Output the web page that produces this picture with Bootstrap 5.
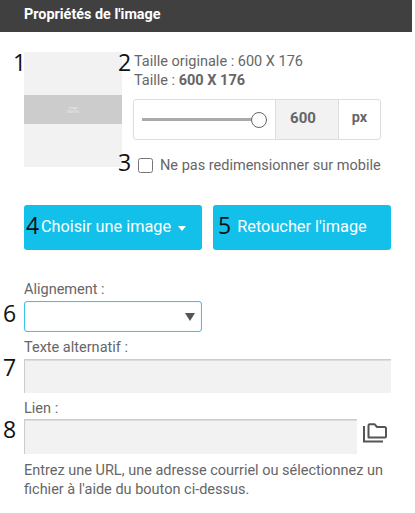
<!DOCTYPE html>
<html lang="fr">
<head>
<meta charset="utf-8">
<title>Propriétés de l'image</title>
<link href="https://cdn.jsdelivr.net/npm/bootstrap@5.3.0/dist/css/bootstrap.min.css" rel="stylesheet">
<style>
html,body{height:100%;overflow:hidden}
body{font-family:Roboto,"Liberation Sans",sans-serif;font-size:14.5px;line-height:19px;color:#666;background:#fff}
.panel-head{height:32px;background:#404040;color:#fff;font-weight:700;font-size:14.4px;line-height:30px;padding-left:24px}
.panel-body{position:relative;padding:20px 24px 0;width:415px}
.top-row{height:153px}
.thumb{width:98px;height:115px;background:#f2f2f2;display:flex;align-items:center;justify-content:center;flex:none;margin-right:12px}
.thumb-band{width:100%;height:29px;background:#ccc;display:flex;align-items:center;justify-content:center;color:#eee;font-size:3px;line-height:4px;text-align:center}
.info-col{width:248px;flex:none;margin-left:-1px}
.info-line{padding-left:1px}
.info-line b{font-weight:700}
.size-box{height:41px;border:1px solid #ddd;border-radius:3px;margin-top:9px;overflow:hidden}
.slider-cell{flex:1;padding:0 8px 0 8px;display:flex;align-items:center}
.track{flex:1;height:3px;background:#aaa}
.knob{width:16px;height:16px;border:1px solid #666;border-radius:50%;background:#fff;margin-left:-1px}
.value-cell{width:64px;background:#f2f2f2;border-left:1px solid #ddd;border-right:1px solid #ddd;font-weight:700;font-size:15px;text-align:center;line-height:36px;padding-right:8px}
.unit-cell{width:41px;font-weight:700;text-align:center;line-height:35px}
.check-line{margin-top:16px;padding-left:5px;height:19px;display:flex;align-items:center;gap:7px}
.check-box{width:15px;height:15px;margin:0;border:1px solid #767676;border-radius:2px;flex:none}
.act-row{gap:11px}
.act-btn{width:178px;height:45px;background:#12c0ea;border:0;border-radius:3px;color:#fff;font-size:16.3px;padding:0;display:flex;align-items:center;justify-content:center;flex:none}
.act-btn:hover{background:#12c0ea;color:#fff}
.act-first{padding-left:1px}
.caret{display:inline-block;width:0;height:0;border-left:4px solid transparent;border-right:4px solid transparent;border-top:5px solid #fff;margin-left:7px;margin-top:2px}
.field-label{display:block;margin:0;height:19px;line-height:19px}
.pick{display:block;width:178px;height:31px;border:1px solid #3cc3e6;border-radius:3px;background:#fff;position:relative;margin-top:2px;box-shadow:inset 0 0 1px #8adcf0}
.pick::after{content:"";position:absolute;right:6px;top:11px;border-left:5px solid transparent;border-right:5px solid transparent;border-top:8px solid #555}
.flat-input{display:block;height:34px;background:#f2f2f2;border:0;border-top:1px solid #ccc;border-left:1px solid #ccc;box-shadow:inset 0 1px 0 #ddd;border-radius:0;padding:0 4px;outline:0}
.wide{width:367px;margin-top:2px}
.narrow{width:333px;height:35px}
.folder{width:24px;height:20px;flex:none;margin-left:6px;margin-top:4px}
.help-text{margin:7px 0 0;line-height:19px}
.f-first{margin-top:30px}
.f-alt{margin-top:6px}
.f-link{margin-top:6px}
.link-row{margin-top:1px}
.marker{position:absolute;font-family:"Open Sans","Noto Sans",sans-serif;font-size:23px;line-height:24px;color:#111}
.edge{position:absolute;top:0;right:0;width:3px;height:100%;background:#fdfdfd}
.m1{left:13px;top:50px}.m2{left:118px;top:50px}.m3{left:118px;top:150px}.m4{left:26px;top:213px}.m5{left:218px;top:213px}.m6{left:3px;top:301px}.m7{left:3px;top:355px}.m8{left:3px;top:417px}
</style>
</head>
<body>
<div class="panel-head">Propriétés de l'image</div>
<div class="panel-body">
  <div class="top-row d-flex">
    <div class="thumb"><div class="thumb-band">image<br>600×176</div></div>
    <div class="info-col">
      <div class="info-line">Taille originale : 600 X 176</div>
      <div class="info-line">Taille : <b>600 X 176</b></div>
      <div class="size-box d-flex">
        <div class="slider-cell"><div class="track"></div><div class="knob"></div></div>
        <div class="value-cell">600</div>
        <div class="unit-cell">px</div>
      </div>
      <label class="check-line"><input type="checkbox" class="check-box"><span>Ne pas redimensionner sur mobile</span></label>
    </div>
  </div>
  <div class="d-flex act-row">
    <button type="button" class="btn act-btn act-first">Choisir une image<span class="caret"></span></button>
    <button type="button" class="btn act-btn">Retoucher l'image</button>
  </div>
  <label class="field-label f-first">Alignement :</label>
  <div class="pick"></div>
  <label class="field-label f-alt">Texte alternatif :</label>
  <input type="text" class="flat-input wide" aria-label="Texte alternatif">
  <label class="field-label f-link">Lien :</label>
  <div class="d-flex align-items-start link-row">
    <input type="text" class="flat-input narrow" aria-label="Lien">
    <svg class="folder" viewBox="0 0 24 20" fill="none" stroke="#555" stroke-width="2"><path d="M1 3V18.500H20"/><path d="M5.500 14.500V2.500C5.500 1.700 6 1.200 6.800 1.200H11.500L14 4H21.500C22.500 4 23 4.500 23 5.500V13.500C23 14.200 22.500 14.500 22 14.500Z" stroke-linejoin="round"/></svg>
  </div>
  <p class="help-text">Entrez une URL, une adresse courriel ou sélectionnez un fichier à l'aide du bouton ci-dessus.</p>
</div>
<span class="marker m1">1</span><span class="marker m2">2</span><span class="marker m3">3</span><span class="marker m4">4</span><span class="marker m5">5</span><span class="marker m6">6</span><span class="marker m7">7</span><span class="marker m8">8</span>
<div class="edge"></div>
</body>
</html>
